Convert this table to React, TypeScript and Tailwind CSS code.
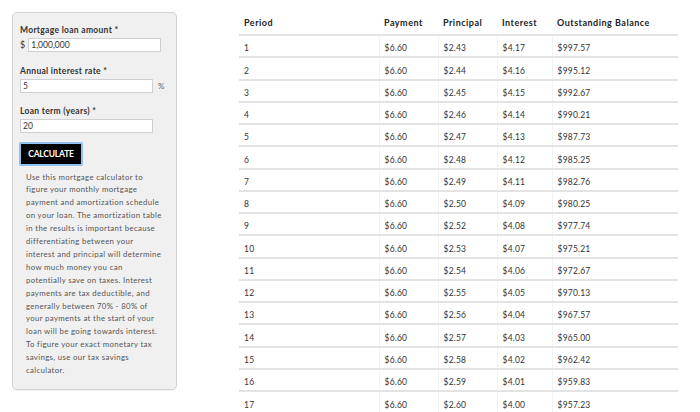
import React from 'react'

const rows = [
  ['1', '$6.60', '$2.43', '$4.17', '$997.57'],
  ['2', '$6.60', '$2.44', '$4.16', '$995.12'],
  ['3', '$6.60', '$2.45', '$4.15', '$992.67'],
  ['4', '$6.60', '$2.46', '$4.14', '$990.21'],
  ['5', '$6.60', '$2.47', '$4.13', '$987.73'],
  ['6', '$6.60', '$2.48', '$4.12', '$985.25'],
  ['7', '$6.60', '$2.49', '$4.11', '$982.76'],
  ['8', '$6.60', '$2.50', '$4.09', '$980.25'],
  ['9', '$6.60', '$2.52', '$4.08', '$977.74'],
  ['10', '$6.60', '$2.53', '$4.07', '$975.21'],
  ['11', '$6.60', '$2.54', '$4.06', '$972.67'],
  ['12', '$6.60', '$2.55', '$4.05', '$970.13'],
  ['13', '$6.60', '$2.56', '$4.04', '$967.57'],
  ['14', '$6.60', '$2.57', '$4.03', '$965.00'],
  ['15', '$6.60', '$2.58', '$4.02', '$962.42'],
  ['16', '$6.60', '$2.59', '$4.01', '$959.83'],
  ['17', '$6.60', '$2.60', '$4.00', '$957.23'],
]

const description = [
  'Use this mortgage calculator to',
  'figure your monthly mortgage',
  'payment and amortization schedule',
  'on your loan. The amortization table',
  'in the results is important because',
  'differentiating between your',
  'interest and principal will determine',
  'how much money you can',
  'potentially save on taxes. Interest',
  'payments are tax deductible, and',
  'generally between 70% - 80% of',
  'your payments at the start of your',
  'loan will be going towards interest.',
  'To figure your exact monetary tax',
  'savings, use our tax savings',
  'calculator.',
]

const widths = ['w-[140px]', 'w-[59px]', 'w-[59px]', 'w-[55px]', 'w-[126px]']

function Field({ label, value, prefix, suffix }: { label: string; value: string; prefix?: string; suffix?: string }) {
  return (
    <div className="flex flex-col">
      <label className="text-[8.5px] font-bold tracking-[0.3px] text-[#333] leading-[12px]">{label}</label>
      <div className="mt-[2px] flex items-center">
        {prefix && <span className="mr-[3px] text-[9px] text-[#333]">{prefix}</span>}
        <input
          readOnly
          value={value}
          className="h-[14px] w-[133px] border border-[#cfcfcf] bg-white px-[2px] text-[8.5px] text-[#333] outline-none"
        />
        {suffix && <span className="ml-[5px] text-[8px] text-[#666]">{suffix}</span>}
      </div>
    </div>
  )
}

export default function App() {
  return (
    <div className="flex h-[412px] overflow-hidden bg-white font-['Lato',sans-serif]">
      <aside className="ml-[12px] mt-[12px] flex h-[378px] w-[165px] shrink-0 flex-col rounded-[5px] border border-[#d2d2d2] bg-[#f0f0f0] px-[7px] pt-[11px] shadow-[0_1px_1px_rgba(0,0,0,0.05)]">
        <div className="flex flex-col gap-[12.5px]">
          <Field label="Mortgage loan amount *" value="1,000,000" prefix="$" />
          <Field label="Annual interest rate *" value="5" suffix="%" />
          <Field label="Loan term (years) *" value="20" />
        </div>
        <button className="mt-[9px] ml-[-1px] h-[24px] w-[64px] rounded-[2px] border-2 border-[#8ec0f0] bg-black text-[8.5px] font-bold tracking-[-0.2px] text-white">
          CALCULATE
        </button>
        <p className="mt-[4.5px] pl-[6px] text-[7.8px] leading-[12.9px] tracking-[0.35px] text-[#555]">
          {description.map((line) => (
            <span key={line} className="block whitespace-nowrap">
              {line}
            </span>
          ))}
        </p>
      </aside>

      <div className="ml-[62px] mt-[12px]">
        <table className="border-collapse text-left">
          <thead>
            <tr className="h-[23px]">
              {['Period', 'Payment', 'Principal', 'Interest', 'Outstanding Balance'].map((h, i) => (
                <th key={h} className={`${widths[i]} px-[5px] text-[9px] font-bold tracking-[0.5px] text-[#222]`}>
                  {h}
                </th>
              ))}
            </tr>
          </thead>
          <tbody>
            {rows.map((r) => (
              <tr key={r[0]} className="h-[22.25px] border-t-2 border-[#e3e3e3]">
                {r.map((c, i) => (
                  <td
                    key={i}
                    className={`${widths[i]} px-[5px] pt-[5px] text-[8.5px] tracking-[0.2px] text-[#333] ${i > 0 ? 'border-l border-[#f3f3f3]' : ''}`}
                  >
                    {c}
                  </td>
                ))}
              </tr>
            ))}
          </tbody>
        </table>
      </div>
    </div>
  )
}
